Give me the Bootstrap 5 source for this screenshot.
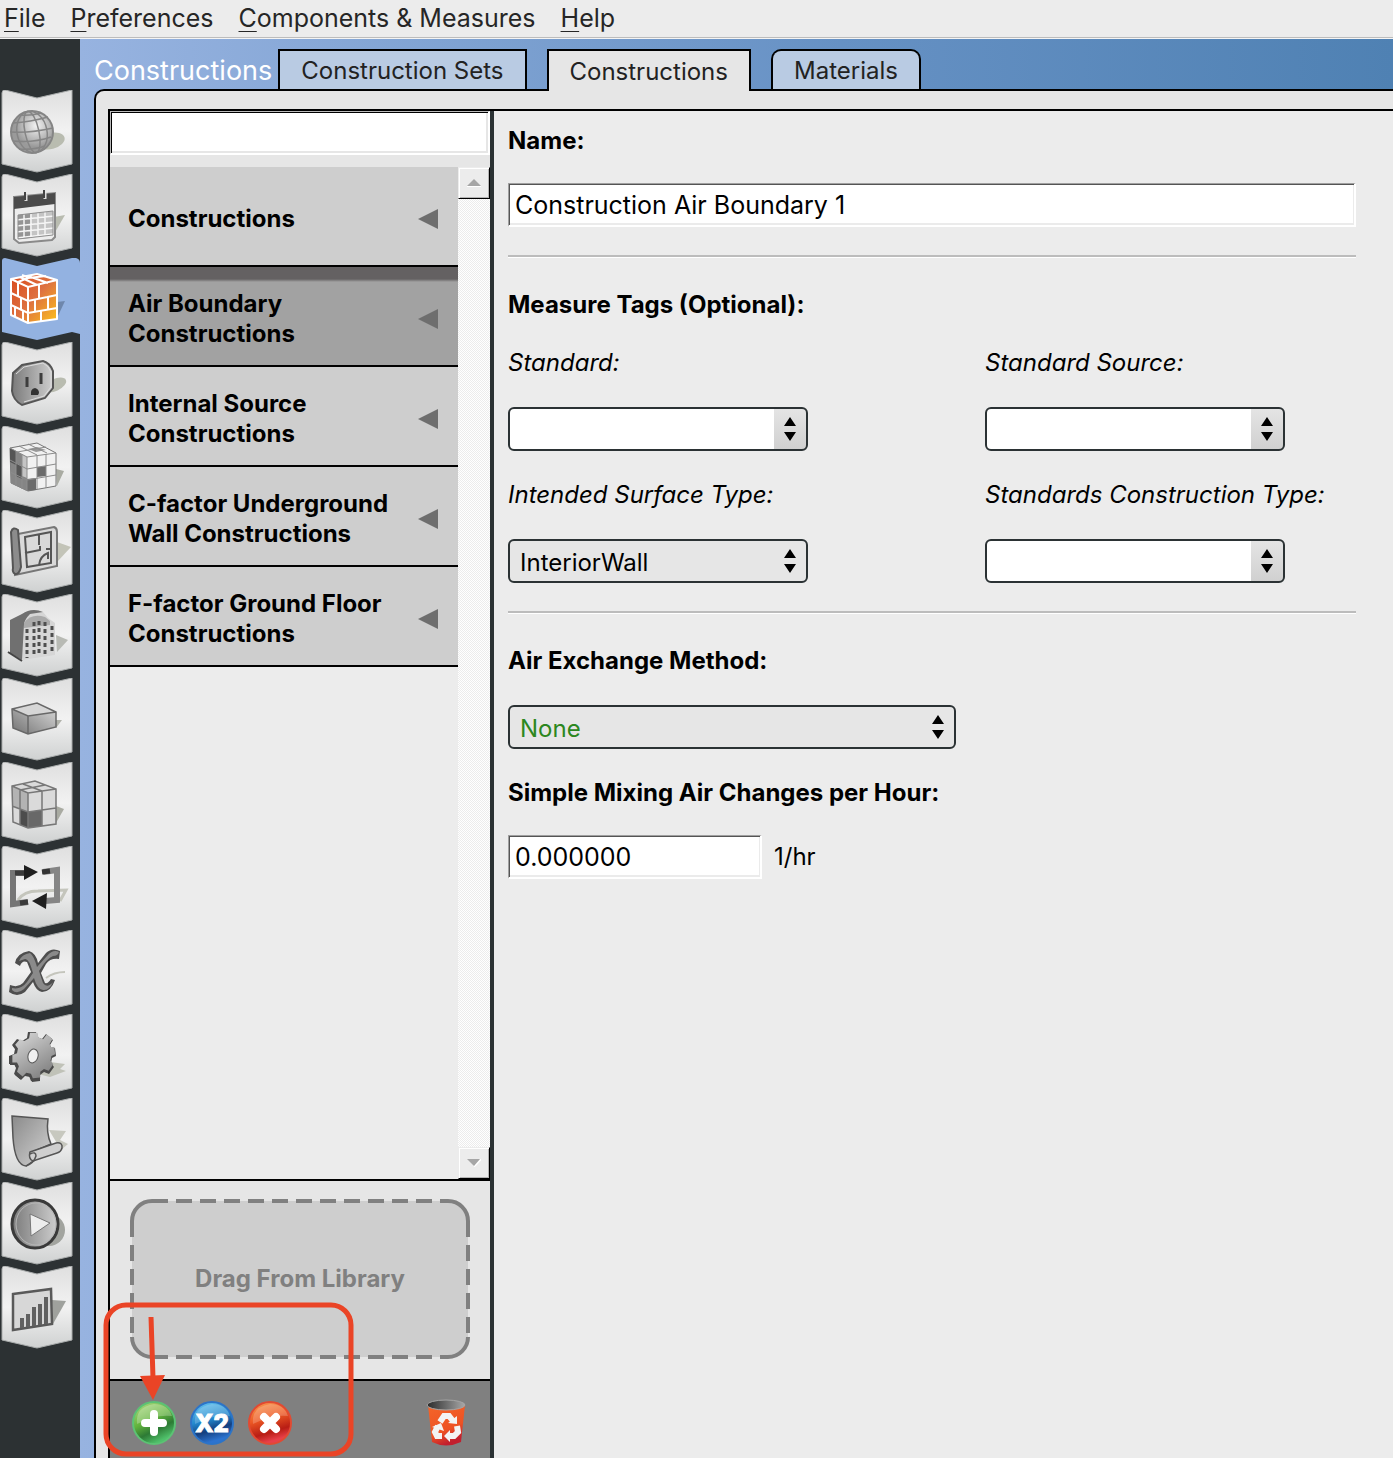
<!DOCTYPE html>
<html lang="en">
<head>
<meta charset="utf-8">
<meta name="viewport" content="width=device-width, initial-scale=1">
<title>Constructions</title>
<link href="https://cdn.jsdelivr.net/npm/bootstrap@5.3.0/dist/css/bootstrap.min.css" rel="stylesheet">
<style>
  body { font-family: Inter, "Liberation Sans", sans-serif; font-size: 24px; line-height: 30px; color: #000; background: #ececec; }
  .menu-bar { height: 39px; gap: 25px; padding: 0 4px; background: #ececec; border-bottom: 1px solid #f4f4f4; box-shadow: inset 0 -1px #bcbcbc; font-size: 25px; line-height: 36px; }
  .menu-bar a { color: #262626; text-decoration: none; }
  .menu-bar u { text-decoration-thickness: 1px; text-underline-offset: 4px; }
  .tool-rail { width: 80px; background: #2c3133; padding-top: 51px; }
  .tool-rail a, .tool-rail svg { display: block; width: 80px; height: 84px; }
  .workspace { background: linear-gradient(90deg, #97b3e0, #6691c4 58%, #4f81b3); padding-left: 14px; min-width: 0; }
  .tab-strip { height: 50px; gap: 20px; padding-top: 10px; }
  .strip-title { font-size: 27px; line-height: 43px; color: #fff; font-weight: 400; margin: 0 -14px 0 0; }
  .tab-btn { height: 40px; padding: 0 21px; border: 2px solid #000; border-bottom: 0; background: #b9cbe3; color: #222; font-size: 24px; line-height: 40px; }
  .tab-btn.active { height: 42px; background: #e6e6e6; line-height: 42px; position: relative; z-index: 1; }
  .tab-btn.soft { border-radius: 10px 10px 0 0; }
  .sheet { border: 2px solid #000; border-width: 2px 0 0 2px; border-top-left-radius: 10px; background: #e6e6e6; padding: 18px 0 0 12px; }
  .frame { border: 2px solid #000; border-width: 2px 0 0 2px; }
  .side { width: 384px; border-right: 4px solid #2b3234; background: #e6e6e6; }
  .sunken { height: 44px; border: 1px solid; border-color: #a0a0a0 #fff #fff #a0a0a0; border-right-width: 2px; border-bottom-width: 2px; border-radius: 0; background: #fff; box-shadow: inset 1px 1px #555, inset -1px -2px #ebebeb; padding: 0 7px 0 6px; font-size: 25px; color: #000; }
  .sunken.search { border-color: #bbb #fff #fff #bbb; box-shadow: inset 1px 1px #000, inset -2px -2px #e6e6e6; }
  .list-wrap { margin-top: 12px; }
  .type-list { background: #ececec; }
  .type-btn { height: 100px; border: 0; border-bottom: 2px solid #000; background: #cecece; padding: 5px 20px 0 18px; font-weight: 700; text-align: left; font-size: 24px; }
  .type-btn.active { background: linear-gradient(#646162 12px, #a2a2a2 15px); }
  .scroller { width: 32px; background: repeating-conic-gradient(#ececec 0 25%, #fff 0 50%) 0 0 / 2px 2px; }
  .scroll-btn { width: 32px; height: 32px; padding: 0; border: 1px solid; border-color: #ececec #000 #000 #ececec; background: #ececec; box-shadow: inset 1px 1px #fff, inset -1px -1px #b4b4b4; line-height: 0; }
  .drop-area { border-top: 2px solid #000; border-bottom: 2px solid #000; padding: 18px 20px 20px; }
  .drop-box { height: 160px; color: #808080; font-weight: 700; font-size: 24px; }
  .drop-box svg { inset: 0; }
  .drop-box span { position: relative; }
  .action-bar { background: #808080; padding: 18px 20px 11px 22px; gap: 14px; }
  .action-bar button { border: 0; background: none; padding: 0; line-height: 0; }
  .callout { left: -7px; bottom: 1px; pointer-events: none; }
  .detail { background: #ececec; padding: 14px 37px 28px 14px; gap: 28px; min-width: 0; }
  .detail label, .detail h2 { font-size: 24px; line-height: 32px; margin: 0; font-weight: 700; }
  .detail .tag-grid label { font-weight: 400; font-style: italic; }
  .detail h2 { margin-bottom: -2px; }
  .pair { display: flex; flex-direction: column; gap: 28px; }
  .pair.typed { gap: 26px; }
  .rule { height: 6px; margin: 0; opacity: 1; border: 0; background: linear-gradient(#bcbcbc 2px, #fff 2px 3px, transparent 3px); }
  .tag-grid { display: grid; grid-template-columns: 9fr 7fr; row-gap: 28px; }
  .pick { width: 300px; height: 44px; border: 2px solid #2b3234; border-radius: 6px; padding: 4px 36px 0 10px; font-size: 24px; line-height: 30px; color: #000;
    background: url("data:image/svg+xml,%3Csvg xmlns='http://www.w3.org/2000/svg' width='12' height='26'%3E%3Cpath d='M6 1 12 10H0zM0 16h12L6 25z'/%3E%3C/svg%3E") no-repeat right 10px center / 12px 26px, #e6e6e6; }
  .pick.blank { background: url("data:image/svg+xml,%3Csvg xmlns='http://www.w3.org/2000/svg' width='12' height='26'%3E%3Cpath d='M6 1 12 10H0zM0 16h12L6 25z'/%3E%3C/svg%3E") no-repeat right 10px center / 12px 26px, linear-gradient(#e4e4e4, #d0d0d0) no-repeat right / 32px 100%, #fff; }
  .pick.wide { width: 448px; color: #2c8720; }
  .rate { width: 254px; }
</style>
</head>
<body class="d-flex flex-column min-vh-100">

<svg width="0" height="0" class="position-absolute" aria-hidden="true">
  <defs>
    <linearGradient id="tileFill" x2="0" y2="1"><stop stop-color="#dfdfdf"/><stop offset=".5" stop-color="#f2f2f2"/><stop offset="1" stop-color="#cfd1d1"/></linearGradient>
    <linearGradient id="steel" x2="1" y2="0"><stop stop-color="#7a7a7a"/><stop offset="1" stop-color="#cfcfcf"/></linearGradient>
    <linearGradient id="steelDown" x2="1" y2="1"><stop stop-color="#8a8a8a"/><stop offset="1" stop-color="#d4d4d4"/></linearGradient>
    <linearGradient id="steelUp" x1="0" y1="1" x2="1" y2="0"><stop stop-color="#727272"/><stop offset="1" stop-color="#dedede"/></linearGradient>
    <linearGradient id="gearFill" x2=".6" y2="1"><stop stop-color="#dcdcdc"/><stop offset="1" stop-color="#858585"/></linearGradient>
    <linearGradient id="fire" x2="1" y2="1"><stop stop-color="#d9481c"/><stop offset=".5" stop-color="#de7140"/><stop offset="1" stop-color="#fcc21c"/></linearGradient>
    <radialGradient id="ball" cx=".6" cy=".35"><stop stop-color="#f2f2f2"/><stop offset="1" stop-color="#9a9a9a"/></radialGradient>
    <path id="tile" d="M2 3Q2 0 5 0L37 8 72 0V74L37 82 2 74Z" fill="url(#tileFill)" stroke="#a9acac" stroke-width="1"/>
    <path id="cog" d="M28 18H36L37 23 42 25 46 20 52 25 49 30 51 34 54 33 55 41 51 43 50 48 53 52 48 59 43 57 39 60V66L31 67 29 62 24 61 20 65 14 60 16 54 14 50 9 50 9 42 14 40 15 35 12 31 17 25 22 27 27 24Z"/>
    <linearGradient id="gBtn" x2=".5" y2="1"><stop stop-color="#b9e08b"/><stop offset=".5" stop-color="#62b33c"/><stop offset=".75" stop-color="#2d7a35"/><stop offset="1" stop-color="#4fc06a"/></linearGradient>
    <linearGradient id="bBtn" x2=".3" y2="1"><stop stop-color="#6fcdf5"/><stop offset=".5" stop-color="#2287cc"/><stop offset=".75" stop-color="#153f7e"/><stop offset="1" stop-color="#2d73cf"/></linearGradient>
    <linearGradient id="rBtn" x2=".3" y2="1"><stop stop-color="#f9a257"/><stop offset=".45" stop-color="#ee5a24"/><stop offset=".8" stop-color="#b81d14"/><stop offset="1" stop-color="#e8404a"/></linearGradient>
    <linearGradient id="bin" y2="1" x2=".4"><stop stop-color="#f4662a"/><stop offset=".7" stop-color="#ee5223"/><stop offset="1" stop-color="#c21f2e"/></linearGradient>
    <linearGradient id="rim" x2="1" y2="0"><stop stop-color="#2b2b2b"/><stop offset="1" stop-color="#a8a8a8"/></linearGradient>
  </defs>
</svg>

<nav class="menu-bar d-flex" aria-label="Application">
  <a href="#"><u>F</u>ile</a>
  <a href="#"><u>P</u>references</a>
  <a href="#"><u>C</u>omponents &amp; Measures</a>
  <a href="#"><u>H</u>elp</a>
</nav>

<div class="d-flex flex-grow-1">
  <nav class="tool-rail flex-shrink-0" aria-label="Sections">
    <a href="#" aria-label="Site"><svg viewBox="0 0 80 84"><use href="#tile"/><ellipse cx="51" cy="51" rx="14" ry="8" fill="#b9bcb0" transform="rotate(-15 51 51)"/><circle cx="32" cy="42" r="21" fill="url(#ball)" stroke="#858585" stroke-width="2"/><g fill="none" stroke="#858585" stroke-width="1.5"><ellipse cx="32" cy="42" rx="7" ry="21" transform="rotate(-12 32 42)"/><ellipse cx="32" cy="42" rx="15" ry="21" transform="rotate(-12 32 42)"/><path d="M13 33Q30 32 48 27M11 42Q32 43 53 38M13 51Q34 53 51 47M19 59Q34 60 45 56M20 25Q30 26 41 23"/></g></svg></a>
    <a href="#" aria-label="Schedules"><svg viewBox="0 0 80 84"><use href="#tile"/><path d="M54 43 65 41 54 60Z" fill="#b9bcb0"/><path d="M14 23 55 19V63L52 66 19 69 14 65Z" fill="#ededed" stroke="#8a8a8a" stroke-width="2"/><path d="M14 23 55 19V30L14 35Z" fill="#4b4b4b"/><path d="M18 41 53 37V61L18 65Z" fill="#c4c4c4"/><path d="M18 41 30 40V64L18 65Z" fill="#959595"/><path d="M16 46 54 42M16 52 54 48M16 58 54 54M16 64 53 60M24 40V64M31 40V64M38 39V63M45 38V62" stroke="#f5f5f5" stroke-width="1.500"/><path d="M18 41 53 37V61L18 65Z" fill="none" stroke="#8f8f8f"/><path d="M26 21V27M45 19V25" stroke="#ddd" stroke-width="3"/><path d="M25 18V26M44 16V24" stroke="#444" stroke-width="2"/></svg></a>
    <a href="#" aria-label="Constructions" aria-current="page"><svg viewBox="0 0 80 84"><path d="M2 3Q2 0 5 0L37 8 72 0H76Q80 1 80 5V76L72 74 37 82 2 74Z" fill="#93b2e1"/><path d="M57 44 65 43 57 60Z" fill="#6e87ac"/><path d="M11 21 37 16 57 22V61L28 65 11 57Z" fill="url(#fire)" stroke="#fff" stroke-width="2" stroke-linejoin="round"/><path d="M11 21 28 29 57 22M28 29V65M11 35 28 43 57 37M11 47 28 55 57 50M18 25V38M21 40V52M15 48V59M23 53V63M39 27V40M48 38V52M35 42V54M41 53V63M20 19 37 27M28 18 48 25M18 24 28 20 46 18M22 17 30 20" fill="none" stroke="#fff" stroke-width="2"/></svg></a>
    <a href="#" aria-label="Loads"><svg viewBox="0 0 80 84"><use href="#tile"/><ellipse cx="55" cy="43" rx="12" ry="6" fill="#b9bcb0" transform="rotate(-25 55 43)"/><path d="M13 31 22 23 43 19Q50 21 53 29V46L45 56 22 63Q13 58 12 49Z" fill="url(#steel)" stroke="#555" stroke-width="2"/><path d="M16 32 24 25 43 21Q49 24 51 30V45L44 54 24 60" fill="none" stroke="#ddd"/><path d="M27 35V45M41 31V42" stroke="#3d3d3d" stroke-width="3"/><path d="M31 53Q30 47 35 46 39 47 39 51L38 53Z" fill="#333"/></svg></a>
    <a href="#" aria-label="Space Types"><svg viewBox="0 0 80 84"><use href="#tile"/><path d="M56 43 64 45 57 60Z" fill="#a9aba2"/><path d="M10 22 37 17 56 27V60L28 65 11 57Z" fill="#f1f1f1" stroke="#777"/><path d="M10 22 27 31V65L11 57Z" fill="#858585"/><path d="M10 22 16 25V39L10 36ZM16 37 22 40V53L16 50Z" fill="#555"/><path d="M22 28 27 31V52L22 50Z" fill="#c4c4c4"/><path d="M37 41 46 40V50L37 51ZM27 53 36 52V64L27 65Z" fill="#6b6b6b"/><path d="M28 23 37 21 46 24 36 26Z" fill="#999"/><path d="M10 22 27 31 56 27M27 31V65M10 34 27 43 56 38M10 46 27 54 56 49M16 25V60M22 28V63M37 30V63M46 28V62M19 20 37 29M28 18 47 27M17 26 46 21" fill="none" stroke="#8c8c8c"/></svg></a>
    <a href="#" aria-label="Geometry"><svg viewBox="0 0 80 84"><use href="#tile"/><path d="M57 32 71 37 57 52Z" fill="#c3c4b8"/><path d="M18 24 54 17Q57 18 57 22V56L15 65Z" fill="#d9d9d9" stroke="#777" stroke-width="2"/><path d="M11 22Q13 16 18 20L21 57Q19 65 15 64 12 62 13 58Z" fill="#8c8c8c" stroke="#555" stroke-width="2"/><path d="M25 27 51 22V53L27 57ZM39 25V35M25 43 40 40V36M51 39H46M39 55Q40 46 48 43V49" fill="none" stroke="#555" stroke-width="2"/></svg></a>
    <a href="#" aria-label="Facility"><svg viewBox="0 0 80 84"><use href="#tile"/><path d="M56 41 68 46 57 58Z" fill="#b8bab4"/><path d="M10 26 22 20Q32 13 43 18L48 24 55 29V61L22 66 10 59Z" fill="#d6d6d6"/><path d="M10 26 22 20Q32 13 43 18L30 20Q25 25 24 30L22 66 10 59Z" fill="#707070"/><path d="M24 29Q31 19 45 23L50 27V31L24 34Z" fill="#aaa"/><path d="M8 58 22 67" stroke="#444" stroke-width="2"/><g stroke="#4e4e4e" stroke-width="3" stroke-dasharray="4 3"><path d="M27 35V64M34 28V63M39 27V62M45 28V61M52 32V60"/></g></svg></a>
    <a href="#" aria-label="Spaces"><svg viewBox="0 0 80 84"><use href="#tile"/><path d="M56 42 62 42 56 50Z" fill="#b0b2aa"/><path d="M12 31 37 25 56 34V49L28 56 13 50Z" fill="url(#steelUp)"/><path d="M12 31 37 25 56 34 28 38Z" fill="#d6d6d6"/><path d="M12 31 37 25 56 34V49L28 56 13 50ZM12 31 28 38 56 34M28 38V56" fill="none" stroke="#686868" stroke-width="1.5"/></svg></a>
    <a href="#" aria-label="Thermal Zones"><svg viewBox="0 0 80 84"><use href="#tile"/><path d="M56 44 64 47 56 61Z" fill="#a9aba2"/><path d="M12 24 35 19 56 27V62L28 66 13 60Z" fill="#dadada"/><path d="M12 24 28 31V50L12 44Z" fill="#b3b3b3"/><path d="M20 47 28 50V66L20 63Z" fill="#4c4c4c"/><path d="M28 50 42 48V64L28 66Z" fill="#686868"/><path d="M12 24 35 19 56 27V62L28 66 13 60ZM12 24 28 31 56 27M28 31V66M12 44 28 50 56 46M20 28V63M42 29V64M20 28 45 23M23 22 42 29" fill="none" stroke="#777" stroke-width="1.5"/></svg></a>
    <a href="#" aria-label="HVAC Systems"><svg viewBox="0 0 80 84"><use href="#tile"/><path d="M18 54Q24 45 38 45L66 44 60 55" fill="none" stroke="#c4c5bc" stroke-width="3"/><path d="M25 27H13V58L28 56" fill="none" stroke="#767676" stroke-width="6"/><path d="M15 27H26M20 57 28 56" stroke="#3a3a3a" stroke-width="5"/><path d="M43 26 57 24V54L45 55" fill="none" stroke="#858585" stroke-width="6"/><path d="M42 26 50 25" stroke="#333" stroke-width="5"/><path d="M24 19 38 26 24 34ZM32 55 47 47 46 63Z" fill="#1f1f1f"/></svg></a>
    <a href="#" aria-label="Output Variables"><svg viewBox="0 0 80 84"><use href="#tile"/><path d="M46 48Q54 42 65 42" fill="none" stroke="#c4c5bc" stroke-width="2"/><path d="M15 33Q17 23 29 21 36 23 38 33L46 23Q52 17 60 21L59 29Q50 28 46 34L41 43 45 53Q48 54 51 49L55 50Q51 62 42 62 36 61 33 52L25 62Q17 68 9 62L10 55Q18 58 23 53L31 42 27 32Q22 30 20 36Z" fill="#4e4e4e"/><path d="M19 31Q22 24 30 23 34 26 37 37L47 26Q53 19 59 22 58 26 53 26 47 28 39 41L43 53Q47 59 53 52 49 61 43 60 37 59 34 48L24 59Q17 65 12 60L12 58Q21 60 27 52L33 43Q29 28 25 29 22 30 19 31Z" fill="#8a8a8a"/></svg></a>
    <a href="#" aria-label="Simulation Settings"><svg viewBox="0 0 80 84"><use href="#tile"/><path d="M38 60 50 48 65 50 60 55 66 57 50 63Z" fill="#c0c2b8"/><use href="#cog" fill="#4a4a4a"/><use href="#cog" x="1" y="1" fill="#4a4a4a"/><use href="#cog" transform="translate(4 2) scale(.93)" fill="url(#gearFill)"/><ellipse cx="33" cy="42" rx="5" ry="7" fill="#f1f1f1" stroke="#555" transform="rotate(15 33 42)"/></svg></a>
    <a href="#" aria-label="Measures"><svg viewBox="0 0 80 84"><use href="#tile"/><path d="M49 32 66 33 60 42 68 46 61 52Z" fill="#c7c8bf"/><path d="M12 18 48 21Q46 35 51 46L30 55 35 62 26 68Q15 67 13 40Z" fill="url(#steelDown)" stroke="#555" stroke-width="1.5"/><path d="M30 54 56 45Q63 44 62 50 61 54 57 55L33 63Q28 61 30 54Z" fill="#cfcfcf" stroke="#555" stroke-width="1.5"/><path d="M30 56Q36 53 36 58 34 65 26 68" fill="none" stroke="#555" stroke-width="1.5"/></svg></a>
    <a href="#" aria-label="Run Simulation"><svg viewBox="0 0 80 84"><use href="#tile"/><ellipse cx="49" cy="48" rx="16" ry="16" fill="#a2a49f"/><ellipse cx="35" cy="42" rx="23" ry="24" fill="url(#steel)" stroke="#3a3a3a" stroke-width="3"/><ellipse cx="36" cy="42" rx="20" ry="21" fill="none" stroke="#b5b5b5"/><path d="M30 32 50 41 31 54Z" fill="#ededed" stroke="#777"/></svg></a>
    <a href="#" aria-label="Results Summary"><svg viewBox="0 0 80 84"><use href="#tile"/><path d="M52 34 66 35 53 58Z" fill="#9fa19d"/><path d="M13 28 51 23 52 58 13 64Z" fill="#d7d7d7" stroke="#595959" stroke-width="2.5"/><path d="M22 62V52M28 61V48M34 60V41M40 59V38M46 58V31" stroke="#606060" stroke-width="4"/></svg></a>
  </nav>

  <main class="workspace flex-grow-1 d-flex flex-column">
    <div class="tab-strip d-flex">
      <h1 class="strip-title">Constructions</h1>
      <button type="button" class="tab-btn">Construction Sets</button>
      <button type="button" class="tab-btn active">Constructions</button>
      <button type="button" class="tab-btn soft">Materials</button>
    </div>

    <div class="sheet flex-grow-1 d-flex">
      <div class="frame flex-grow-1 d-flex">
        <aside class="side flex-shrink-0 d-flex flex-column">
          <input type="text" class="sunken search w-100" aria-label="Search">
          <div class="list-wrap d-flex flex-grow-1">
            <div class="type-list flex-grow-1 d-flex flex-column">
              <button type="button" class="type-btn d-flex align-items-center justify-content-between"><span>Constructions</span><svg width="20" height="20"><path d="M0 10 20 0V20Z" fill="#6e6e6e"/></svg></button>
              <button type="button" class="type-btn active d-flex align-items-center justify-content-between"><span>Air Boundary<br>Constructions</span><svg width="20" height="20"><path d="M0 10 20 0V20Z" fill="#6e6e6e"/></svg></button>
              <button type="button" class="type-btn d-flex align-items-center justify-content-between"><span>Internal Source<br>Constructions</span><svg width="20" height="20"><path d="M0 10 20 0V20Z" fill="#6e6e6e"/></svg></button>
              <button type="button" class="type-btn d-flex align-items-center justify-content-between"><span>C-factor Underground<br>Wall Constructions</span><svg width="20" height="20"><path d="M0 10 20 0V20Z" fill="#6e6e6e"/></svg></button>
              <button type="button" class="type-btn d-flex align-items-center justify-content-between"><span>F-factor Ground Floor<br>Constructions</span><svg width="20" height="20"><path d="M0 10 20 0V20Z" fill="#6e6e6e"/></svg></button>
            </div>
            <div class="scroller d-flex flex-column justify-content-between">
              <button type="button" class="scroll-btn" aria-label="Scroll up"><svg width="14" height="8"><path d="M0 7 7 0 14 7Z" fill="#a6a6a6"/><path d="M0 7.500H14" stroke="#fff"/></svg></button>
              <button type="button" class="scroll-btn" aria-label="Scroll down"><svg width="14" height="8"><path d="M14 0 7 7.500" stroke="#fff" stroke-width="2"/><path d="M0 0H13L7 7Z" fill="#a6a6a6"/></svg></button>
            </div>
          </div>

          <div class="position-relative">
            <div class="drop-area">
              <div class="drop-box position-relative d-flex align-items-center justify-content-center">
                <svg class="position-absolute" width="340" height="160" viewBox="0 0 340 160"><rect x="2" y="2" width="336" height="156" rx="20" fill="#cecece"/><g fill="none" stroke="#808080" stroke-width="4"><path d="M22 2H318M22 158H318M2 22V138M338 22V138" stroke-dasharray="16 8"/><path d="M2 22A20 20 0 0 1 22 2M318 2A20 20 0 0 1 338 22M338 138A20 20 0 0 1 318 158M22 158A20 20 0 0 1 2 138"/></g></svg>
                <span>Drag From Library</span>
              </div>
            </div>
            <div class="action-bar d-flex align-items-center">
              <button type="button" aria-label="Add"><svg width="44" height="44"><circle cx="22" cy="22" r="21" fill="url(#gBtn)" stroke="#5cc274" stroke-width="2"/><path d="M5 23Q3 6 22 3 36 3 40 15 24 13 5 23Z" fill="#fff" opacity=".25"/><path d="M22 13V31M13 22H31" stroke="#fff" stroke-width="8" stroke-linecap="round"/></svg></button>
              <button type="button" aria-label="Duplicate"><svg width="44" height="44"><circle cx="22" cy="22" r="21" fill="url(#bBtn)" stroke="#2c74c8" stroke-width="2"/><path d="M5 23Q3 6 22 3 36 3 40 15 24 13 5 23Z" fill="#fff" opacity=".2"/><text x="22" y="31" text-anchor="middle" font-size="24" font-weight="800" fill="#fff" stroke="#fff">X2</text></svg></button>
              <button type="button" aria-label="Remove"><svg width="44" height="44"><circle cx="22" cy="22" r="21" fill="url(#rBtn)" stroke="#e14a32" stroke-width="2"/><path d="M5 23Q3 6 22 3 36 3 40 15 24 13 5 23Z" fill="#fff" opacity=".2"/><path d="M16 16 28 28M28 16 16 28" stroke="#fff" stroke-width="8" stroke-linecap="round"/></svg></button>
              <button type="button" class="ms-auto" aria-label="Purge unused"><svg width="48" height="48" viewBox="-4 0 48 48"><path d="M2 6 6 43Q20 50 35 43L39 6Z" fill="url(#bin)"/><ellipse cx="20" cy="6" rx="19" ry="5" fill="url(#rim)" stroke="#a5a5a5" stroke-width="1"/><g fill="none" stroke="#f3f3f3" stroke-width="6"><path d="M14 23 18 17H23L27 22M31 27 32 33 28 37H22M16 37H11L9 33 12 27"/></g><path d="M22 24 31 25 31 17ZM24 31V43L18 37ZM6 28 15 24 18 32Z" fill="#f3f3f3"/></svg></button>
            </div>
            <svg class="callout position-absolute" width="251" height="155" aria-hidden="true"><rect x="3" y="3" width="245" height="149" rx="20" fill="none" stroke="#ea4426" stroke-width="5"/><path d="M48 15 50 76" stroke="#ea4426" stroke-width="5"/><path d="M37 74 62 73 50 98Z" fill="#ea4426"/></svg>
          </div>
        </aside>

        <section class="detail flex-grow-1 d-flex flex-column">
          <div class="pair typed">
            <label for="cname">Name:</label>
            <input id="cname" type="text" class="sunken w-100" value="Construction Air Boundary 1">
          </div>
          <hr class="rule">
          <h2>Measure Tags (Optional):</h2>
          <div class="tag-grid">
            <div class="pair"><label for="std">Standard:</label><select id="std" class="form-select pick blank"><option></option></select></div>
            <div class="pair"><label for="src">Standard Source:</label><select id="src" class="form-select pick blank"><option></option></select></div>
            <div class="pair"><label for="surf">Intended Surface Type:</label><select id="surf" class="form-select pick"><option>InteriorWall</option></select></div>
            <div class="pair"><label for="ctype">Standards Construction Type:</label><select id="ctype" class="form-select pick blank"><option></option></select></div>
          </div>
          <hr class="rule">
          <div class="pair"><label for="air">Air Exchange Method:</label><select id="air" class="form-select pick wide"><option>None</option></select></div>
          <div class="pair typed">
            <label for="ach">Simple Mixing Air Changes per Hour:</label>
            <div class="d-flex align-items-center">
              <input id="ach" type="text" class="sunken rate" value="0.000000">
              <span class="ms-2 ps-1">1/hr</span>
            </div>
          </div>
        </section>
      </div>
    </div>
  </main>
</div>
<script src="https://cdn.jsdelivr.net/npm/bootstrap@5.3.0/dist/js/bootstrap.bundle.min.js"></script>
</body>
</html>
